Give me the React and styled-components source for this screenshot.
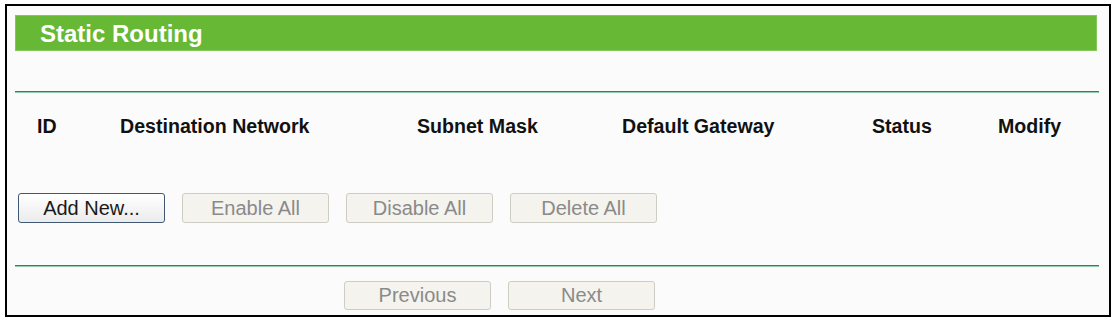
import React from "react";
import styled, { createGlobalStyle } from "styled-components";

const GlobalStyle = createGlobalStyle`
    html, body {
        margin: 0;
        padding: 0;
        background: #ffffff;
        font-family: "Liberation Sans", Arial, sans-serif;
    }
`;

const Frame = styled.div`
    box-sizing: border-box;
    margin: 4px 0 0 5px;
    width: 1106px;
    height: 313px;
    border: 2px solid #000;
    background: #fbfbfb;
    padding: 9px 10px 0 8px;
`;

const Title = styled.div`
    box-sizing: border-box;
    height: 36px;
    margin-right: 2px;
    padding: 1px 0 0 24px;
    background: #67b834;
    border: 1px solid #84c75c;
    color: #fff;
    font-size: 24px;
    font-weight: bold;
    line-height: 33px;
`;

const Spacer = styled.div`
    height: 40px;
`;

const Rule = styled.div`
    height: 1px;
    background: #3e7d60;
    border-bottom: 1px solid #94cbad;
`;

const HeadRow = styled.div`
    display: grid;
    grid-template-columns: 83px 297px 205px 250px 126px 1fr;
    align-items: center;
    height: 66px;
    padding-left: 22px;
    font-size: 19.6px;
    font-weight: bold;
    color: #111;
`;

const ButtonRow = styled.div`
    display: flex;
    gap: 17px;
    padding: ${({ top }) => top}px 0 ${({ bottom }) => bottom}px
        ${({ left }) => left}px;
`;

const Button = styled.button`
    box-sizing: border-box;
    width: 147px;
    height: ${({ tall }) => (tall ? 30 : 29)}px;
    padding: 0;
    border-radius: 3px;
    font-family: "Liberation Sans", Arial, sans-serif;
    font-size: 20px;
    border: 1px solid ${({ disabled }) => (disabled ? "#cdcdc4" : "#3f5873")};
    background: ${({ disabled }) =>
        disabled ? "#f4f3ee" : "linear-gradient(#ffffff, #ebebeb)"};
    color: ${({ disabled }) => (disabled ? "#8a8a8a" : "#1a1a1a")};
`;

const columns = [
    "ID",
    "Destination Network",
    "Subnet Mask",
    "Default Gateway",
    "Status",
    "Modify",
];

const App = () => {
    return (
        <>
            <GlobalStyle />
            <Frame>
                <Title>Static Routing</Title>
                <Spacer />
                <Rule />
                <HeadRow>
                    {columns.map((c) => (
                        <span key={c}>{c}</span>
                    ))}
                </HeadRow>
                <ButtonRow top={34} bottom={42} left={3}>
                    <Button tall>Add New...</Button>
                    <Button tall disabled>
                        Enable All
                    </Button>
                    <Button tall disabled>
                        Disable All
                    </Button>
                    <Button tall disabled>
                        Delete All
                    </Button>
                </ButtonRow>
                <Rule />
                <ButtonRow top={14} bottom={0} left={329}>
                    <Button disabled>Previous</Button>
                    <Button disabled>Next</Button>
                </ButtonRow>
            </Frame>
        </>
    );
};

export default App;
